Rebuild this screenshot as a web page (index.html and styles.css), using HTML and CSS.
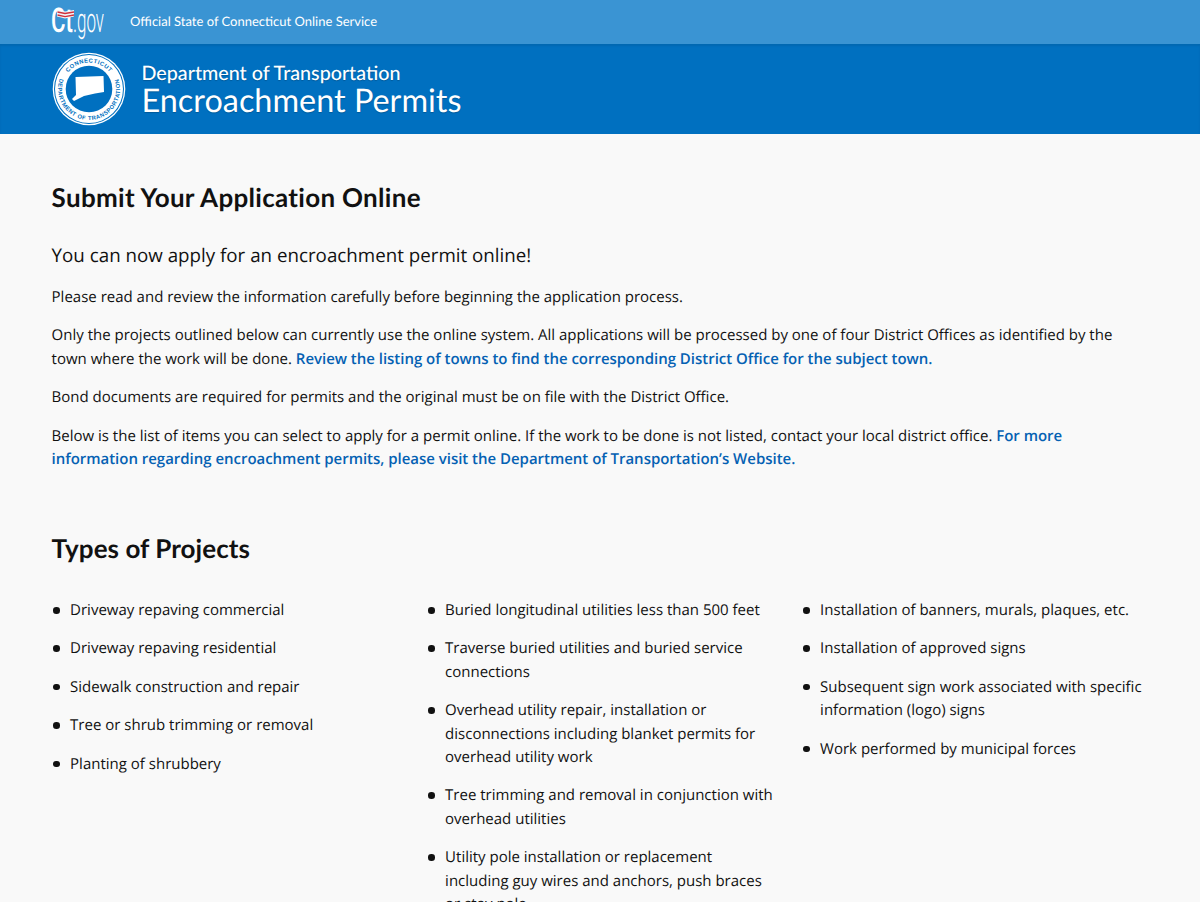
FILE: index.html
```html
<!DOCTYPE html>
<html lang="en">
<head>
<meta charset="utf-8">
<title>Encroachment Permits</title>
<link rel="stylesheet" href="styles.css">
</head>
<body>
<div class="page">
  <div class="topbar">
    <svg class="ct-logo" width="54" height="44" viewBox="0 0 54 44">
      <text class="ct-big" x="0" y="32" textLength="22" lengthAdjust="spacingAndGlyphs">Ct</text>
      <text class="ct-small" x="22" y="32" textLength="31" lengthAdjust="spacingAndGlyphs">.gov</text>
      <path d="M6 10 L14 11.5 L23 10 L23 16.5 L14 18.5 L6 16.5Z" fill="#f2f5f8"/>
      <path d="M6.5 12 L14 13.5 L23 12" fill="none" stroke="#d0303c" stroke-width="1.3"/>
      <path d="M6.5 15 L14 16.6 L23 15" fill="none" stroke="#d0303c" stroke-width="1.3"/>
    </svg>
    <span class="official">Official State of Connecticut Online Service</span>
  </div>
  <header class="banner">
    <svg class="seal" width="74" height="74" viewBox="0 0 74 74">
      <defs>
        <path id="arc-top" d="M37 63.5 A26.5 26.5 0 1 1 37 10.5 A26.5 26.5 0 1 1 37 63.5"/>
        <path id="arc-bot" d="M37 6 A31 31 0 1 0 37 68 A31 31 0 1 0 37 6"/>
      </defs>
      <circle cx="37" cy="37" r="36.3" fill="#fff"/>
      <circle cx="37" cy="37" r="35" fill="#0070c0"/>
      <circle cx="37" cy="37" r="34" fill="#fff"/>
      <circle cx="37" cy="37" r="23.3" fill="#0070c0"/>
      <text class="seal-text"><textPath href="#arc-top" startOffset="50%" text-anchor="middle">CONNECTICUT</textPath></text>
      <text class="seal-text"><textPath href="#arc-bot" startOffset="50%" text-anchor="middle">DEPARTMENT OF TRANSPORTATION</textPath></text>
      <path d="M23.5 25 L51.5 24 L52 40 L43 41.5 L32 44 L22 49 L20 47 L24 43 Z" fill="#fff"/>
    </svg>
    <div class="titles">
      <div class="dept">Department of Transportation</div>
      <div class="app">Encroachment Permits</div>
    </div>
  </header>
  <main class="content">
    <h1 class="h-main">Submit Your Application Online</h1>
    <p class="lead">You can now apply for an encroachment permit online!</p>
    <p class="para">Please read and review the information carefully before beginning the application process.</p>
    <p class="para">Only the projects outlined below can currently use the online system. All applications will be processed by one of four District Offices as identified by the town where the work will be done. <a class="link" href="#">Review the listing of towns to find the corresponding District Office for the subject town.</a></p>
    <p class="para">Bond documents are required for permits and the original must be on file with the District Office.</p>
    <p class="para">Below is the list of items you can select to apply for a permit online. If the work to be done is not listed, contact your local district office. <a class="link" href="#">For more information regarding encroachment permits, please visit the Department of Transportation’s Website.</a></p>
    <h2 class="h-sub">Types of Projects</h2>
    <div class="columns">
      <ul class="list">
        <li>Driveway repaving commercial</li>
        <li>Driveway repaving residential</li>
        <li>Sidewalk construction and repair</li>
        <li>Tree or shrub trimming or removal</li>
        <li>Planting of shrubbery</li>
      </ul>
      <ul class="list">
        <li>Buried longitudinal utilities less than 500 feet</li>
        <li>Traverse buried utilities and buried service connections</li>
        <li>Overhead utility repair, installation or disconnections including blanket permits for overhead utility work</li>
        <li>Tree trimming and removal in conjunction with overhead utilities</li>
        <li>Utility pole installation or replacement including guy wires and anchors, push braces or stay pole</li>
      </ul>
      <ul class="list">
        <li>Installation of banners, murals, plaques, etc.</li>
        <li>Installation of approved signs</li>
        <li>Subsequent sign work associated with specific information (logo) signs</li>
        <li>Work performed by municipal forces</li>
      </ul>
    </div>
  </main>
</div>
</body>
</html>
```
FILE: styles.css
```css
html, body { margin: 0; padding: 0; }
body { background: #f9f9f9; color: #111; font-family: "Open Sans", "Noto Sans", sans-serif; text-rendering: geometricPrecision; }
.page { height: 902px; overflow: hidden; }
.topbar { height: 44px; box-sizing: border-box; background: #3a94d3; display: flex; align-items: center; padding-left: 51px; }
.ct-logo { flex: none; }
.ct-big { font: 500 34px "Roboto", sans-serif; fill: #fff; }
.ct-small { font: 300 34px "Roboto", sans-serif; fill: #fff; }
.official { margin-left: 25px; margin-top: -2px; font: 400 13px "Lato", sans-serif; color: #fff; }
.banner { height: 90px; box-sizing: border-box; background: #0070c0; box-shadow: inset 0 2px 2px rgba(0,0,0,.08); display: flex; align-items: center; padding-left: 52px; color: #fff; }
.seal { flex: none; }
.titles { margin-left: 15.5px; margin-top: -.5px; font-family: "Lato", sans-serif; text-shadow: 0 1px 1px rgba(0,0,0,.2); }
.dept { font-size: 19.7px; line-height: 24px; font-weight: 500; }
.app { margin-top: -1.5px; font-size: 32.4px; line-height: 32px; }
.seal-text { font: 700 5.8px "Liberation Sans", sans-serif; fill: #0070c0; letter-spacing: .5px; }
.content { padding: 46px 48px 0 51.6px; }
.h-main { margin: 0 0 28px; font: 700 26px/34px "Lato", sans-serif; letter-spacing: .3px; }
.lead { margin: 0 0 16px; font-size: 18.75px; line-height: 28px; }
.para { margin: 0 0 15px; max-width: 1085px; font-size: 15px; line-height: 23.4px; }
.link { color: #0561b3; font-weight: 600; letter-spacing: -.025px; text-decoration: none; }
.h-sub { margin: 60px 0 33.5px; font: 700 26px/34px "Lato", sans-serif; letter-spacing: .05px; }
.columns { display: grid; grid-template-columns: repeat(3, 350px); column-gap: 25px; }
.list { margin: 0; padding: 0 0 0 18.5px; list-style: none; font-size: 15px; line-height: 23.4px; }
.list li { position: relative; margin-bottom: 15px; }
.list li::before { content: ""; position: absolute; left: -17.2px; top: 8px; width: 6.6px; height: 6.6px; border-radius: 50%; background: #111; }
```
